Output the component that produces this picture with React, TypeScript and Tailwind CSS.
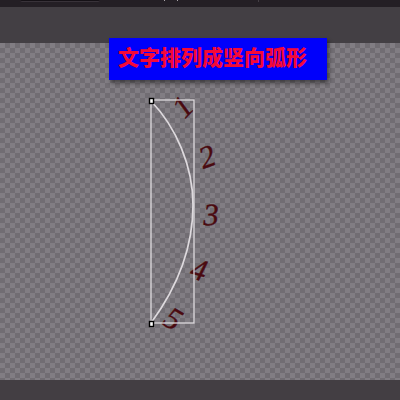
import React from 'react';

interface Glyph {
  char: string;
  x: number;
  y: number;
  angle: number;
}

const glyphs: Glyph[] = [
  { char: '1', x: 42, y: 17, angle: -46 },
  { char: '2', x: 66, y: 67, angle: -20 },
  { char: '3', x: 70, y: 125, angle: -1 },
  { char: '4', x: 58, y: 180, angle: 16 },
  { char: '5', x: 32, y: 229, angle: 30 },
];

function Toolbar() {
  return (
    <header>
      <div className="flex h-[7px] items-start bg-[#241f25]">
        <div className="ml-5 h-0.5 w-20 rounded-b-sm border-b border-[#383239] bg-[#151116]" />
        <div className="ml-16 h-px w-px bg-[#aaa5aa]" />
        <div className="ml-3 h-px w-px bg-[#aaa5aa]" />
        <div className="ml-20 h-0.5 w-px bg-[#443f45]" />
      </div>
      <div className="h-9 bg-[#433f44]" />
    </header>
  );
}

function PathText() {
  return (
    <svg
      className="absolute top-[37px] left-[141px] overflow-visible"
      width="90"
      height="260"
      viewBox="0 -10 90 260"
    >
      {glyphs.map((g) => (
        <text
          key={g.char}
          transform={`translate(${g.x} ${g.y}) rotate(${g.angle})`}
          y="10"
          textAnchor="middle"
          className="fill-[#4a0a10] stroke-[#4a0a10] font-['Liberation_Serif',serif] text-[31px] italic"
          strokeWidth="0.4"
        >
          {g.char}
        </text>
      ))}
      <g fill="none" stroke="#dedade">
        <rect x="10" y="10" width="43" height="223" strokeWidth="1.3" />
        <path d="M10 11C35 37 52 76 52 115C52 160 35 199 10 233" strokeWidth="1.7" />
      </g>
      <g fill="#fff" stroke="#000" strokeWidth="1.4">
        <rect x="8.5" y="8.5" width="4" height="5" />
        <rect x="8.5" y="231.5" width="4" height="5" />
      </g>
    </svg>
  );
}

export default function App() {
  return (
    <div className="flex min-h-screen flex-col bg-[#433f44]">
      <Toolbar />
      <main className="relative flex-1 bg-[#807c82] bg-[repeating-conic-gradient(#716d73_0_25%,#817d83_0_50%)] bg-[length:10px_10px]">
        <PathText />
        <h1 className="absolute -top-[5px] left-[109px] bg-[#0000fb] pt-px pr-5 pb-[7px] pl-[9px] font-['Noto_Sans_CJK_SC',sans-serif] text-[21px] leading-[34px] font-black whitespace-nowrap text-[#f40838] shadow-[2px_3px_4px_rgba(0,0,0,0.45)]">
          文字排列成竖向弧形
        </h1>
      </main>
      <footer className="h-5 bg-[#433e43]" />
    </div>
  );
}
